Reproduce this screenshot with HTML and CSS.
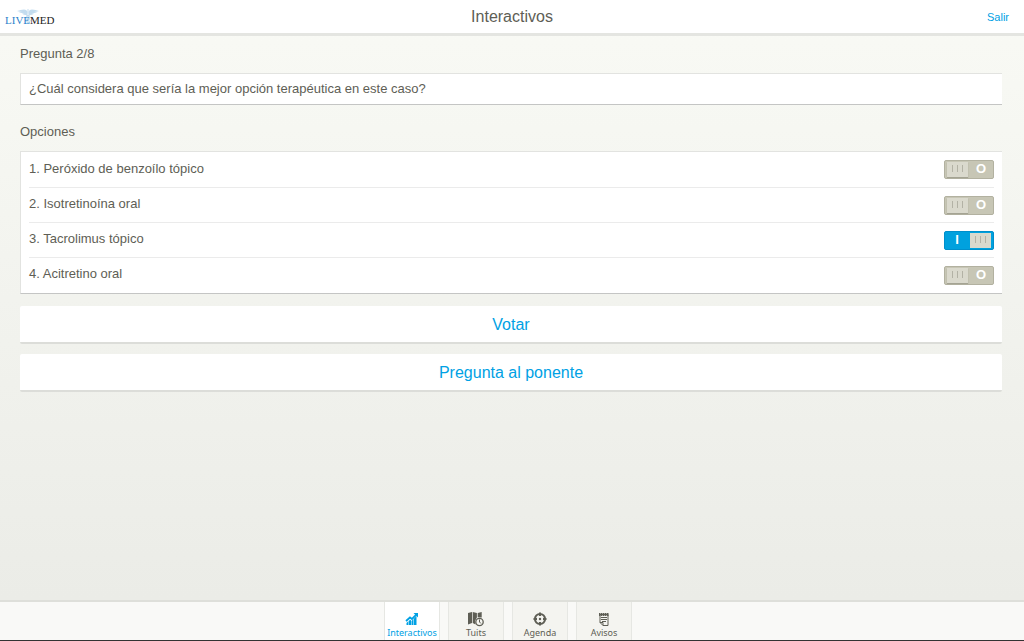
FILE: index.html
```html
<!DOCTYPE html>
<html lang="es">
<head>
  <meta charset="UTF-8">
  <meta name="viewport" content="width=device-width, initial-scale=1.0">
  <title>Interactivos</title>
  <link rel="stylesheet" href="styles.css">
</head>
<body>
  <header class="header">
    <div class="logo">
      <svg class="logo-mark" width="24" height="17" viewBox="0 0 24 17" fill="#c3dcef">
        <path d="M1 3c3-.5 4-1.500 7-1.500 2 0 3 1 3.500 2.500L11 7C9 7 7 6.500 6 5.500c1 0 2-.2 2.500-.5C6 5.200 4 4.800 3 4c1 0 2 0 3-.3C4 3.800 2 3.600 1 3z"/>
        <path d="M23 3c-3-.5-4-1.500-7-1.500-2 0-3 1-3.500 2.500L13 7c2 0 4-.5 5-1.500-1 0-2-.2-2.500-.5 2.500.2 4.500-.2 5.500-1-1 0-2 0-3-.3 2 .1 4-.1 5-.7z"/>
        <path d="M12 1v15M10 7c5 1.500 5 3 2 4s-3 2 0 4M14 7c-5 1.500-5 3-2 4s3 2 0 4" fill="none" stroke="#c3dcef"/>
      </svg>
      <span class="logo-live">LIVE</span><span class="logo-med">MED</span>
    </div>
    <h1 class="title">Interactivos</h1>
    <a class="logout" href="#">Salir</a>
  </header>

  <main class="content">
    <h2 class="section-title">Pregunta 2/8</h2>
    <div class="panel">
      <p class="question">¿Cuál considera que sería la mejor opción terapéutica en este caso?</p>
    </div>

    <h2 class="section-title">Opciones</h2>
    <div class="panel options">
      <div class="option">
        <label for="opcion1">1. Peróxido de benzoílo tópico</label>
        <input class="toggle" type="checkbox" id="opcion1">
      </div>
      <div class="option">
        <label for="opcion2">2. Isotretinoína oral</label>
        <input class="toggle" type="checkbox" id="opcion2">
      </div>
      <div class="option">
        <label for="opcion3">3. Tacrolimus tópico</label>
        <input class="toggle" type="checkbox" id="opcion3" checked>
      </div>
      <div class="option">
        <label for="opcion4">4. Acitretino oral</label>
        <input class="toggle" type="checkbox" id="opcion4">
      </div>
    </div>

    <button class="button">Votar</button>
    <button class="button">Pregunta al ponente</button>
  </main>

  <nav class="tabs">
    <a class="tab active" href="#">
      <svg width="16" height="16" viewBox="0 0 16 16" fill="currentColor">
        <path d="M2.500 12l2-2v4h-2zM5 9.500l2-.5v5H5zM7.500 10l2-2v6h-2zM10 7.500l2.500-2.500v9H10z"/>
        <path d="M2 10l4-3.500 2 1.500 4.500-4.500" fill="none" stroke="currentColor" stroke-width="1.800"/>
        <path d="M9.500 2H14v4.500z"/>
      </svg>
      Interactivos
    </a>
    <a class="tab" href="#">
      <svg width="16" height="16" viewBox="0 0 16 16" fill="currentColor">
        <path d="M0 2l4-1v11l-4 1.500zM4.700 1l4.200 1v4.500L7 10l.5 3.500-2.800-1.500zM9.700 2l4-1v5.500l-4-.2z"/>
        <circle cx="11.500" cy="11" r="3.700" fill="#f4f4f0" stroke="currentColor" stroke-width="1.300"/>
        <path d="M11.500 8.500V11l1.500 1.500" fill="none" stroke="currentColor"/>
      </svg>
      Tuits
    </a>
    <a class="tab" href="#">
      <svg width="16" height="16" viewBox="0 0 16 16" fill="none" stroke="currentColor">
        <circle cx="8" cy="8" r="5" stroke-width="2.200"/>
        <path d="M8 1.500V5M8 11v3.500M1.500 8H5M11 8h3.500" stroke-width="2"/>
        <circle cx="8" cy="8" r="1.200" fill="currentColor" stroke="none"/>
      </svg>
      Agenda
    </a>
    <a class="tab" href="#">
      <svg width="16" height="16" viewBox="0 0 16 16" fill="none" stroke="currentColor">
        <path d="M4 3.500v8l3 3h5v-11zM4 11.500h3v3"/>
        <path d="M3 3.500h10" stroke-width="3" stroke-dasharray="1.500 .5"/>
        <path d="M5 6.500h6M5 8.500h6M6 10.500h4" stroke-width="1.200"/>
      </svg>
      Avisos
    </a>
  </nav>
</body>
</html>
```

FILE: styles.css
```css
* {
  box-sizing: border-box;
}

body {
  font-family: "Liberation Sans", Arial, sans-serif;
  font-size: 13px;
  line-height: 16px;
  margin: 0;
  min-height: 100vh;
  display: flex;
  flex-direction: column;
  color: #5e5e55;
  background: linear-gradient(#f9faf5, #eaebe6);
}

a {
  color: #00a1e4;
  text-decoration: none;
}

.header {
  display: grid;
  grid-template-columns: 1fr auto 1fr;
  align-items: center;
  height: 36px;
  background: white;
  border-bottom: 3px solid #e4e5e1;
}

.logo {
  position: relative;
  display: flex;
  padding: 6px 0 0 5px;
  font-family: "Liberation Serif", "Times New Roman", serif;
  font-size: 11px;
}

.logo-mark {
  position: absolute;
  left: 16px;
  top: 2px;
}

.logo-live {
  position: relative;
  color: #2b7fcb;
}

.logo-med {
  position: relative;
  color: #222;
}

.title {
  margin: 0;
  font-size: 16px;
  font-weight: normal;
}

.logout {
  justify-self: end;
  padding-right: 15px;
  font-size: 11px;
}

.content {
  flex: 1;
  padding: 10px 22px 10px 20px;
}

.section-title {
  margin: 0 0 11px;
  font-size: 13px;
  font-weight: normal;
}

.panel {
  padding: 0 8px;
  margin-bottom: 19px;
  background: white;
  border: 1px solid #e2e3e0;
  border-right: none;
  border-bottom-color: #c4c5c4;
}

.question {
  margin: 0;
  padding: 7px 0;
}

.options {
  padding-bottom: 1px;
  margin-bottom: 12px;
}

.option {
  display: flex;
  align-items: center;
  justify-content: space-between;
  height: 35px;
}

.option label {
  padding-bottom: 2px;
}

.option + .option {
  border-top: 1px solid #ebebeb;
}

.toggle {
  appearance: none;
  position: relative;
  width: 50px;
  height: 19px;
  margin: 0;
  background: #c7c6b5;
  border: 1px solid #b2b1a0;
  border-radius: 2px;
  color: white;
  font: bold 13px/16px "Liberation Sans", Arial, sans-serif;
  cursor: pointer;
}

.toggle::before {
  content: "O";
  position: absolute;
  right: 0;
  width: 24px;
  text-align: center;
}

.toggle::after {
  content: "";
  position: absolute;
  left: 2px;
  top: 1px;
  width: 21px;
  height: 15px;
  background:
    linear-gradient(#b3b2a5, #b3b2a5) 5px 3px / 1px 7px no-repeat,
    linear-gradient(#b3b2a5, #b3b2a5) 10px 3px / 1px 7px no-repeat,
    linear-gradient(#b3b2a5, #b3b2a5) 15px 3px / 1px 7px no-repeat,
    #dad9cd;
  box-shadow: 0 1px 1px #a4a393;
}

.toggle:checked {
  background: #00a1de;
  border-color: #008fcb;
}

.toggle:checked::before {
  content: "I";
  right: auto;
  left: 0;
}

.toggle:checked::after {
  left: 25px;
  box-shadow: none;
}

.button {
  display: block;
  width: 100%;
  height: 38px;
  margin: 0 0 10px;
  padding: 2px 0 0;
  font: 16px "Liberation Sans", Arial, sans-serif;
  color: #00a1e4;
  background: white;
  border: none;
  border-bottom: 2px solid #dcddd9;
  border-radius: 2px;
  cursor: pointer;
}

.tabs {
  display: flex;
  justify-content: center;
  height: 41px;
  background: #f9f9f7;
  border-top: 2px solid #dedfda;
  border-bottom: 1px solid #333;
}

.tab {
  display: flex;
  flex-direction: column;
  align-items: center;
  width: 56px;
  margin-right: 8px;
  padding-top: 9px;
  font-family: "Noto Sans", sans-serif;
  font-size: 9px;
  line-height: 12px;
  color: #5e5e55;
  background: #f4f4f0;
  border: 1px solid #e6e7e3;
  border-width: 0 1px;
}

.tab svg {
  flex: none;
}

.tab.active {
  color: #00a1e4;
  background: white;
}
```
